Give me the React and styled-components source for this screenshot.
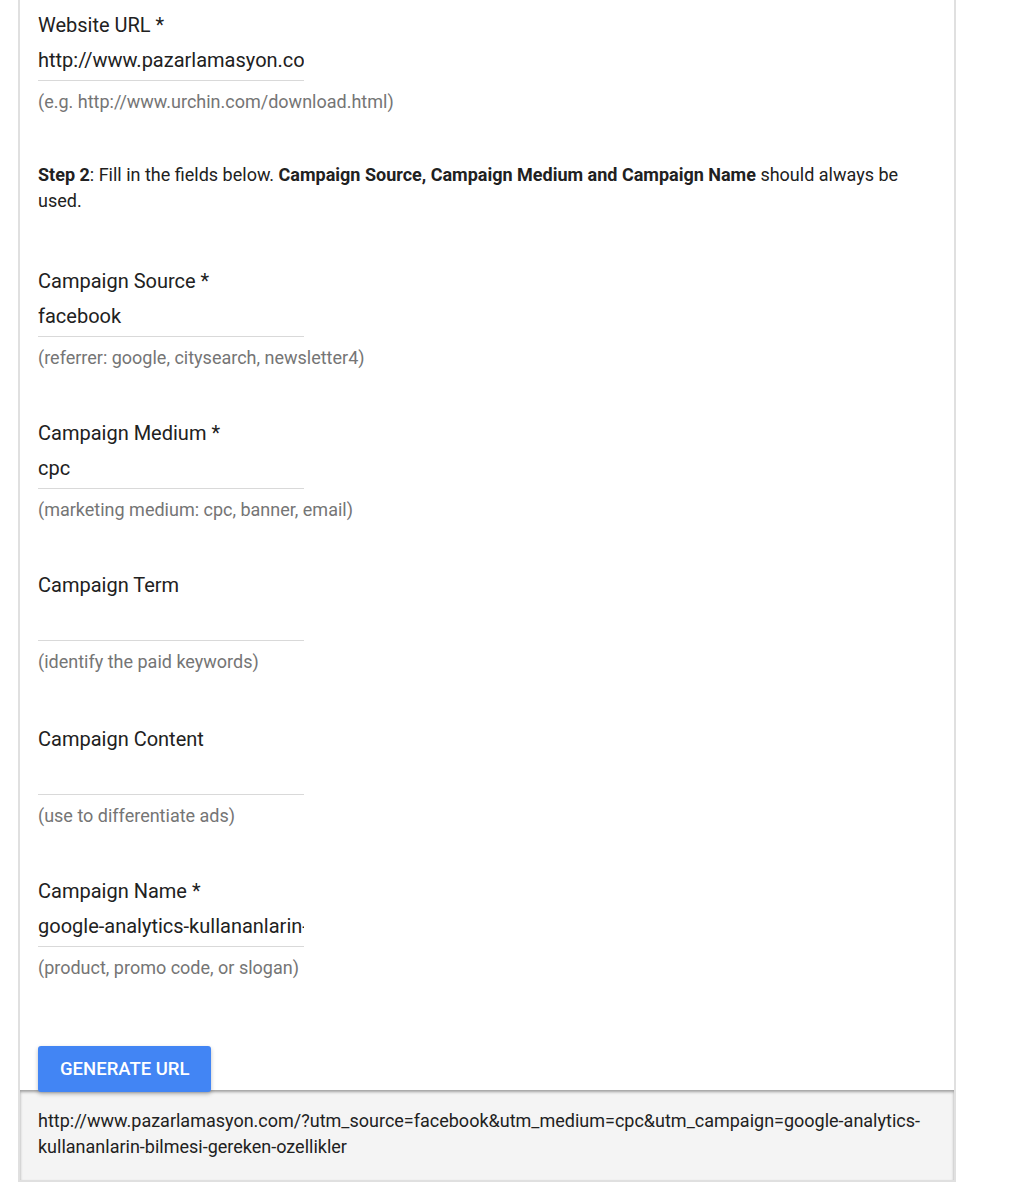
import React from 'react'
import styled, { createGlobalStyle } from 'styled-components'

const GlobalStyle = createGlobalStyle`
body {
  margin: 0;
  background: #fff;
  font-family: Roboto, "Liberation Sans", Arial, sans-serif;
  color: #212121;
}
`

const Card = styled.div`
margin-left: 18px;
width: 938px;
box-sizing: border-box;
border: 2px solid #e0e0e0;
border-top: none;
background: #fff;
`

const FormArea = styled.div`
padding: 13px 18px 0;
display: flex;
flex-direction: column;
align-items: flex-start;
`

const Field = styled.div`
display: flex;
flex-direction: column;
margin-bottom: ${p => p.gap}px;
`

const Label = styled.label`
font-size: 20px;
line-height: 24px;
color: #212121;
`

const TextInput = styled.input`
width: 266px;
height: 44px;
box-sizing: border-box;
padding: 3px 0 0;
border: none;
border-bottom: 1px solid #d9d9d9;
outline: none;
font-family: Roboto, "Liberation Sans", Arial, sans-serif;
font-size: 20px;
color: #212121;
background: transparent;
`

const Helper = styled.div`
margin-top: 10px;
font-size: 18px;
line-height: 22px;
color: #757575;
`

const StepText = styled.p`
margin: 0 0 55px;
font-size: 18px;
line-height: 26px;
color: #212121;
b { font-weight: 700; }
`

const GenerateButton = styled.button`
position: relative;
z-index: 1;
margin: 67px 0 -2px;
height: 46px;
padding: 0 22px;
border: none;
border-radius: 3px;
background: #4285f4;
color: #fff;
font-family: Roboto, "Liberation Sans", Arial, sans-serif;
font-size: 18.5px;
font-weight: 500;
box-shadow: 0 2px 4px rgba(0, 0, 0, 0.25);
cursor: pointer;
`

const Result = styled.div`
background: #f4f4f4;
padding: 18px 18px 20px;
font-size: 18px;
line-height: 26px;
color: #212121;
box-shadow: inset 0 2px 3px rgba(0, 0, 0, 0.35);
word-break: break-word;
`

const fields = [
  { label: 'Campaign Source *', value: 'facebook', help: '(referrer: google, citysearch, newsletter4)', gap: 52 },
  { label: 'Campaign Medium *', value: 'cpc', help: '(marketing medium: cpc, banner, email)', gap: 52 },
  { label: 'Campaign Term', value: '', help: '(identify the paid keywords)', gap: 54 },
  { label: 'Campaign Content', value: '', help: '(use to differentiate ads)', gap: 52 },
  { label: 'Campaign Name *', value: 'google-analytics-kullananlarin-bilmesi-gereken-ozellikler', help: '(product, promo code, or slogan)', gap: 0 },
]

export default function App() {
  return (
    <>
      <GlobalStyle />
      <Card>
        <FormArea>
          <Field gap={49}>
            <Label>Website URL *</Label>
            <TextInput defaultValue="http://www.pazarlamasyon.com/" />
            <Helper>(e.g. http://www.urchin.com/download.html)</Helper>
          </Field>
          <StepText>
            <b>Step 2</b>: Fill in the fields below. <b>Campaign Source, Campaign Medium and Campaign Name</b> should always be used.
          </StepText>
          {fields.map((f, i) => (
            <Field key={i} gap={f.gap}>
              <Label>{f.label}</Label>
              <TextInput defaultValue={f.value} />
              <Helper>{f.help}</Helper>
            </Field>
          ))}
          <GenerateButton type="button">GENERATE URL</GenerateButton>
        </FormArea>
        <Result>
          http://www.pazarlamasyon.com/?utm_source=facebook&amp;utm_medium=cpc&amp;utm_campaign=google-analytics-kullananlarin-bilmesi-gereken-ozellikler
        </Result>
      </Card>
    </>
  )
}
